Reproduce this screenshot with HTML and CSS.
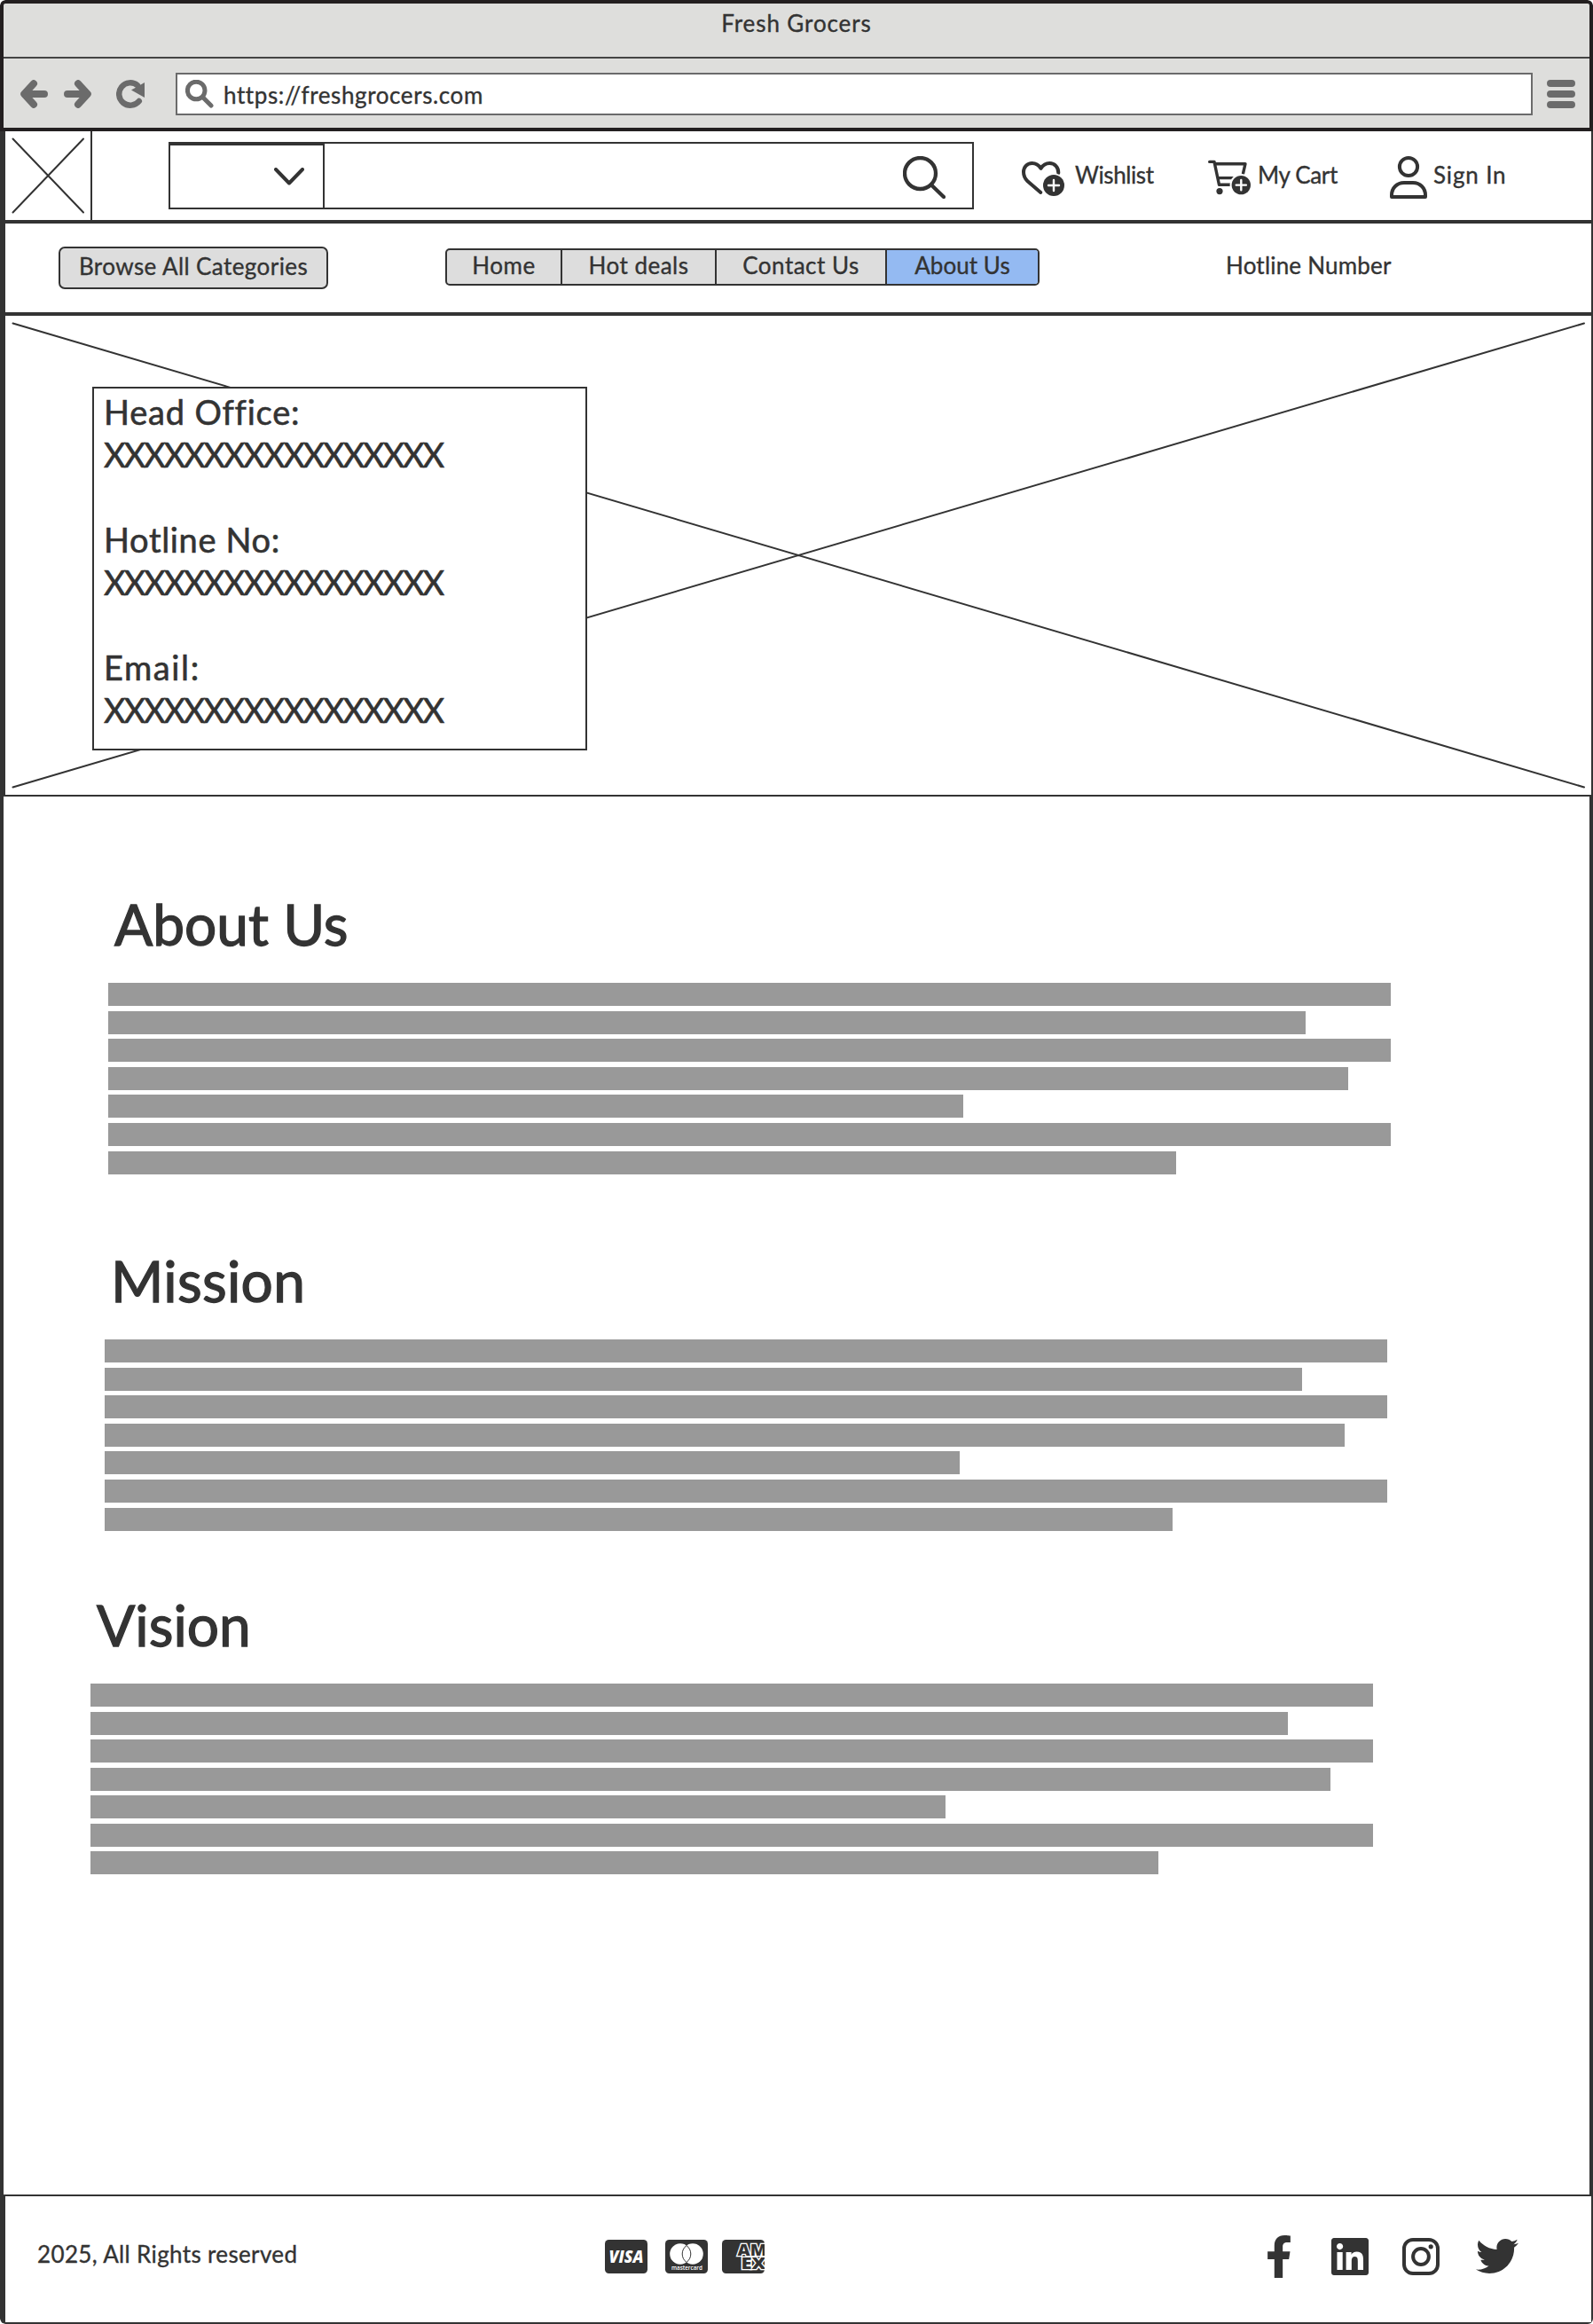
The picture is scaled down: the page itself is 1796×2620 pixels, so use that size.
FILE: index.html
```html
<!DOCTYPE html>
<html lang="en">
<head>
<meta charset="utf-8">
<title>Fresh Grocers</title>
<link rel="stylesheet" href="styles.css">
</head>
<body>
<div class="page">
  <div class="chrome">
    <div class="titlebar"><span class="t t-title">Fresh Grocers</span></div>
    <div class="toolbar">
      <svg class="tool" viewBox="0 0 32 32"><path d="M16 4.2 5.2 16 16 27.8M7 16h21"/></svg>
      <svg class="tool tool-forward" viewBox="0 0 32 32"><path d="M16 4.2 26.800 16 16 27.800M25 16H4"/></svg>
      <svg class="tool tool-reload" viewBox="0 0 32 32"><path class="arc" d="M24 6.200A12.700 12.700 0 1 0 25.800 24"/><path class="head" d="M32 3v17L17 11.500z"/></svg>
      <div class="url">
        <svg class="url-icon" viewBox="0 0 32 32"><circle cx="12.200" cy="12" r="9.800"/><path d="M19.500 19.500 29 29"/></svg>
        <span class="t t-url">https://freshgrocers.com</span>
      </div>
      <svg class="menu" viewBox="0 0 32 32"><path d="M4 4h24M4 16h24M4 28h24"/></svg>
    </div>
  </div>

  <header class="header">
    <div class="logo"><svg viewBox="0 0 96 100"><path d="M8.500 8.500 88 91.500M88 8.500 8.500 91.500"/></svg></div>
    <div class="search">
      <div class="select"><svg viewBox="0 0 34 20"><path d="M2 2 17 17.500 32 2"/></svg></div>
      <svg class="search-icon" viewBox="0 0 48 48"><circle cx="19.500" cy="19.500" r="17.500"/><path d="M32 32.500 46 46"/></svg>
    </div>
    <div class="actions">
      <a class="action">
        <svg class="icon" viewBox="0 0 48 48"><path d="M41.300 19C41.500 12.500 37 8 31.300 8c-4 0-7.300 1.900-9.800 5.800C19 9.900 15.600 8 11.600 8 6 8 2 12.500 2 18c0 4 1.500 7.300 4.500 10.200L21.300 41"/><circle class="gap" cx="36" cy="33" r="13.500"/><circle class="badge" cx="36" cy="33" r="12"/><path class="plus" d="M36 27v12M30 33h12"/></svg>
        <span class="t t-wish">Wishlist</span>
      </a>
      <a class="action">
        <svg class="icon icon-cart" viewBox="0 0 48 48"><path d="M1.700 6.400H7L12.500 32.300H27M8.500 8.700H42L39.500 19.500M11 24.600H29"/><circle class="gap" cx="37.300" cy="32.600" r="12.700"/><circle class="badge" cx="13" cy="39.600" r="3.600"/><circle class="badge" cx="37.300" cy="32.600" r="10.700"/><path class="plus" d="M37.300 27v11.200M31.700 32.600h11.200"/></svg>
        <span class="t t-cart">My Cart</span>
      </a>
      <a class="action">
        <svg class="icon icon-user" viewBox="0 0 42 48"><ellipse cx="21" cy="12" rx="10.100" ry="10"/><path d="M2 46v-2C2 36 8 30 16 30h10c8 0 14 6 14 14v2z"/></svg>
        <span class="t t-sign">Sign In</span>
      </a>
    </div>
  </header>

  <nav class="nav">
    <button class="browse"><span class="t t-browse">Browse All Categories</span></button>
    <div class="tabs">
      <a class="tab"><span class="t t-home">Home</span></a>
      <a class="tab"><span class="t t-deals">Hot deals</span></a>
      <a class="tab"><span class="t t-contact">Contact Us</span></a>
      <a class="tab"><span class="t t-about">About Us</span></a>
    </div>
    <span class="t t-hotline">Hotline Number</span>
  </nav>

  <section class="hero">
    <svg class="hero-cross" viewBox="0 0 1788 540"><path d="M8.500 8.500 1780 531.500M1780 8.500 8.500 531.500"/></svg>
    <div class="contact">
      <p class="c-head">Head Office:</p>
      <p class="c-x">XXXXXXXXXXXXXXXXX</p>
      <p class="c-hot second">Hotline No:</p>
      <p class="c-x">XXXXXXXXXXXXXXXXX</p>
      <p class="c-mail second">Email:</p>
      <p class="c-x">XXXXXXXXXXXXXXXXX</p>
    </div>
  </section>

  <main class="main">
    <section class="block about">
      <h2>About Us</h2>
      <div class="lines"><i></i><i></i><i></i><i></i><i></i><i></i><i></i></div>
    </section>
    <section class="block mission">
      <h2>Mission</h2>
      <div class="lines"><i></i><i></i><i></i><i></i><i></i><i></i><i></i></div>
    </section>
    <section class="block vision">
      <h2>Vision</h2>
      <div class="lines"><i></i><i></i><i></i><i></i><i></i><i></i><i></i></div>
    </section>
  </main>

  <footer class="footer">
    <span class="t t-copy">2025, All Rights reserved</span>
    <div class="cards">
      <svg viewBox="0 0 48 38"><rect width="48" height="38" rx="4.500"/><text class="visa" x="4.500" y="25.500" textLength="39" lengthAdjust="spacingAndGlyphs">VISA</text></svg>
      <svg viewBox="0 0 48 38"><rect width="48" height="38" rx="4.500"/><circle class="disc" cx="17" cy="16" r="11.800"/><circle class="disc" cx="31" cy="16" r="11.800"/><path class="lens" d="M24 6.500a11.800 11.800 0 0 1 0 19 11.800 11.800 0 0 1 0-19z"/><text class="mc" x="7" y="34" textLength="35" lengthAdjust="spacingAndGlyphs">mastercard</text></svg>
      <svg viewBox="0 0 48 38"><rect width="48" height="38" rx="4.500"/><text class="amex" x="17.500" y="18" textLength="33" lengthAdjust="spacingAndGlyphs">AM</text><text class="amex" x="21.500" y="32.500" textLength="28" lengthAdjust="spacingAndGlyphs">EX</text></svg>
    </div>
    <div class="social">
      <svg class="fb" viewBox="22.890 0 274.220 512"><path d="M279.140 288l14.220-92.660h-88.910v-60.130c0-25.350 12.420-50.060 52.240-50.060h40.420V6.260S260.430 0 225.360 0c-73.220 0-121.080 44.380-121.080 124.720v70.620H22.890V288h81.390v224h100.170V288z"/></svg>
      <svg class="sq" viewBox="0 32 448 448"><path d="M416 32H31.900C14.300 32 0 46.500 0 64.300v383.400C0 465.500 14.300 480 31.900 480H416c17.600 0 32-14.500 32-32.300V64.300c0-17.800-14.400-32.300-32-32.300zM135.400 416H69V202.200h66.500V416zm-33.200-243c-21.300 0-38.500-17.300-38.500-38.500S80.900 96 102.200 96c21.200 0 38.500 17.300 38.500 38.500 0 21.300-17.200 38.500-38.500 38.500zm282.100 243h-66.400V312c0-24.800-.5-56.700-34.500-56.700-34.600 0-39.900 27-39.900 54.900V416h-66.400V202.200h63.700v29.200h.9c8.900-16.800 30.600-34.500 62.900-34.500 67.200 0 79.700 44.300 79.700 101.900V416z"/></svg>
      <svg class="sq insta" viewBox="0 0 42 42"><rect x="2" y="2" width="38" height="38" rx="10"/><circle cx="21" cy="21" r="8.900"/><circle class="dot" cx="32.200" cy="9.800" r="2.600"/></svg>
      <svg class="tw" viewBox="0 48 512 416"><path d="M459.370 151.716c.325 4.548.325 9.097.325 13.645 0 138.720-105.583 298.558-298.558 298.558-59.452 0-114.680-17.219-161.137-47.106 8.447.974 16.568 1.299 25.340 1.299 49.055 0 94.213-16.568 130.274-44.832-46.132-.975-84.792-31.188-98.112-72.772 6.498.974 12.995 1.624 19.818 1.624 9.421 0 18.843-1.300 27.614-3.573-48.081-9.747-84.143-51.980-84.143-102.985v-1.299c13.969 7.797 30.214 12.670 47.431 13.319-28.264-18.843-46.781-51.005-46.781-87.391 0-19.492 5.197-37.360 14.294-52.954 51.655 63.675 129.300 105.258 216.365 109.807-1.624-7.797-2.599-15.918-2.599-24.040 0-57.828 46.782-104.934 104.934-104.934 30.213 0 57.502 12.670 76.670 33.137 23.715-4.548 46.456-13.320 66.599-25.340-7.798 24.366-24.366 44.833-46.132 57.827 21.117-2.273 41.584-8.122 60.426-16.243-14.292 20.791-32.161 39.308-52.628 54.253z"/></svg>
    </div>
  </footer>
</div>
</body>
</html>
```

FILE: styles.css
```css
* { box-sizing: border-box; }
body { margin: 0; background: #fff; color: #333; font-family: Lato, "Open Sans", sans-serif; }
p, h2 { margin: 0; font-weight: 400; }
svg { display: block; flex: none; }

.page { width: 1796px; height: 2620px; display: flex; flex-direction: column; overflow: hidden; border-radius: 6px; }
.t { font-size: 26px; line-height: 32px; white-space: nowrap; -webkit-text-stroke: .35px #333; }
.t-title { letter-spacing: .9px; }
.t-url { letter-spacing: .6px; }
.t-wish { letter-spacing: -.4px; }
.t-cart { letter-spacing: -.35px; }
.t-sign { letter-spacing: .85px; }
.t-browse { letter-spacing: .42px; }
.t-home { letter-spacing: .5px; }
.t-deals, .t-contact { letter-spacing: .5px; }
.t-about { letter-spacing: .05px; }
.t-hotline { letter-spacing: .2px; }
.t-copy { letter-spacing: .36px; }

/* Browser chrome */
.chrome { height: 148px; border: 4px solid #231f20; border-radius: 6px 6px 0 0; background: #dededc; display: flex; flex-direction: column; }
.titlebar { height: 62px; border-bottom: 2px solid #444; padding-top: 6px; display: flex; justify-content: center; }
.toolbar { padding: 16px 16px 0 18px; display: flex; align-items: center; }
.tool, .menu { width: 32px; height: 32px; fill: none; stroke: #6b6b6b; stroke-width: 8; stroke-linecap: round; stroke-linejoin: round; }
.tool-forward { margin-left: 18px; }
.tool-reload { margin-left: 27px; }
.tool .arc { stroke-width: 6.5; }
.tool .head { fill: #6b6b6b; stroke: none; }
.url { flex: 1; height: 48px; margin: 0 16px 0 35px; background: #fff; border: 2px solid #6b6b6b; display: flex; align-items: center; padding-left: 9px; }
.url-icon { width: 32px; height: 32px; fill: none; stroke: #6b6b6b; stroke-width: 5; stroke-linecap: round; }
.t-url { margin: 1px 0 0 11px; }

/* Store header */
.header { height: 104px; border-left: 6px solid #333; border-right: 2px solid #333; border-bottom: 4px solid #333; display: flex; align-items: center; }
.logo { width: 98px; height: 100px; border-right: 2px solid #333; }
.logo svg { width: 96px; height: 100px; fill: none; stroke: #333; stroke-width: 2; stroke-linecap: round; }
.search { width: 908px; height: 76px; margin-left: 86px; border: 2px solid #333; display: flex; justify-content: space-between; align-items: center; padding-right: 30px; }
.select { width: 174px; height: 72px; border-top: 2px solid #333; border-right: 2px solid #333; display: flex; align-items: center; justify-content: flex-end; padding-right: 21px; }
.select svg { width: 34px; height: 20px; fill: none; stroke: #333; stroke-width: 4; stroke-linecap: round; stroke-linejoin: round; }
.search-icon { width: 48px; height: 48px; margin-top: 4px; fill: none; stroke: #333; stroke-width: 4.3; stroke-linecap: round; }
.actions { margin-left: 54px; display: grid; grid-template-columns: 210px 205px auto; }
.action { display: flex; align-items: center; }
.action .t { margin-bottom: 3px; }
.icon { width: 48px; height: 48px; margin-top: 4px; margin-right: 12px; fill: none; stroke: #333; stroke-width: 4; stroke-linecap: round; stroke-linejoin: round; }
.icon-cart { stroke-width: 3.4; margin-right: 8px; }
.icon-user { width: 42px; margin-right: 7px; }
.icon .badge { fill: #333; stroke: none; }
.icon .gap { fill: #fff; stroke: none; }
.icon .plus { stroke: #fff; stroke-width: 2.4; }

/* Navigation */
.nav { height: 104px; border-left: 6px solid #333; border-right: 2px solid #333; border-bottom: 4px solid #333; display: flex; align-items: flex-start; }
.browse { margin: 26px 0 0 60px; padding: 0 0 1px; width: 304px; height: 48px; border: 2px solid #333; border-radius: 7px; background: #ddd; color: inherit; font: inherit; display: flex; align-items: center; justify-content: center; }
.browse .t { margin-bottom: 4px; }
.tabs { margin: 28px 0 0 132px; width: 670px; height: 42px; border: 2px solid #333; border-radius: 5px; background: #ddd; display: grid; grid-template-columns: 130px 174px 192px 1fr; overflow: hidden; }
.tab { display: flex; justify-content: center; border-right: 2px solid #333; padding-top: 1px; }
.tab:last-child { border-right: 0; background: #94baf2; }
.t-hotline { margin: 31px 0 0 210px; }

/* Hero */
.hero { height: 542px; position: relative; border-left: 6px solid #333; border-right: 2px solid #333; border-bottom: 2px solid #333; padding: 80px 0 0 98px; }
.hero-cross { position: absolute; left: 0; top: 0; width: 1788px; height: 540px; fill: none; stroke: #333; stroke-width: 2; stroke-linecap: round; }
.contact { position: relative; width: 558px; height: 410px; background: #fff; border: 2px solid #333; padding: 2px 0 0 11px; }
.contact p { height: 48px; font-size: 38px; line-height: 48px; white-space: nowrap; -webkit-text-stroke: .6px #333; }
.contact .second { margin-top: 48px; }
.contact .c-head { letter-spacing: .8px; }
.contact .c-x { letter-spacing: -2.2px; }
.contact .c-hot { letter-spacing: .65px; }
.contact .c-mail { letter-spacing: 1.6px; }

/* Content */
.main { flex: 1; border: solid #333; border-width: 0 4px; }
.block h2 { height: 78px; font-size: 64px; line-height: 76px; padding-left: 7px; -webkit-text-stroke: 1.3px #333; }
.about { padding: 106px 0 0 118px; }
.mission { padding: 82.4px 0 0 114px; }
.mission h2 { letter-spacing: .3px; }
.vision { padding: 68.4px 0 0 98px; }
.lines { width: 1446px; display: grid; gap: 5.6px; padding-top: 26px; }
.lines i { height: 26px; background: #999; }
.lines i:nth-child(2) { width: 93.35%; }
.lines i:nth-child(4) { width: 96.7%; }
.lines i:nth-child(5) { width: 66.67%; }
.lines i:nth-child(7) { width: 83.27%; }

/* Footer */
.footer { height: 146px; border: solid #333; border-width: 2px 2px 2px 6px; border-radius: 0 0 0 6px; display: flex; align-items: flex-start; }
.t-copy { width: 294px; margin: 49px 0 0 36px; }
.cards { width: 747px; margin: 49px 0 0 346px; display: flex; }
.cards svg { width: 48px; height: 38px; fill: #333; margin-right: 20px; }
.cards svg:nth-child(2) { margin-right: 16px; }
.cards text { fill: #fff; }
.visa { font: italic 800 19px "Open Sans", sans-serif; }
.mc { font: 600 7.5px "Open Sans", sans-serif; }
.cards .lens { fill: #fff; stroke: #333; stroke-width: 1; }
.disc { fill: #fff; }
.cards .amex { font: 800 17px "Open Sans", sans-serif; fill: #333; stroke: #fff; stroke-width: 2.4; paint-order: stroke; }
.social { display: flex; fill: #333; }
.fb { width: 26px; height: 48px; margin-top: 44px; }
.sq { width: 42px; height: 42px; margin: 47px 0 0 46px; }
.insta { margin-left: 38px; fill: none; stroke: #333; stroke-width: 4; }
.insta .dot { fill: #333; stroke: none; }
.tw { width: 48px; height: 39px; margin: 48px 0 0 41px; }
```
